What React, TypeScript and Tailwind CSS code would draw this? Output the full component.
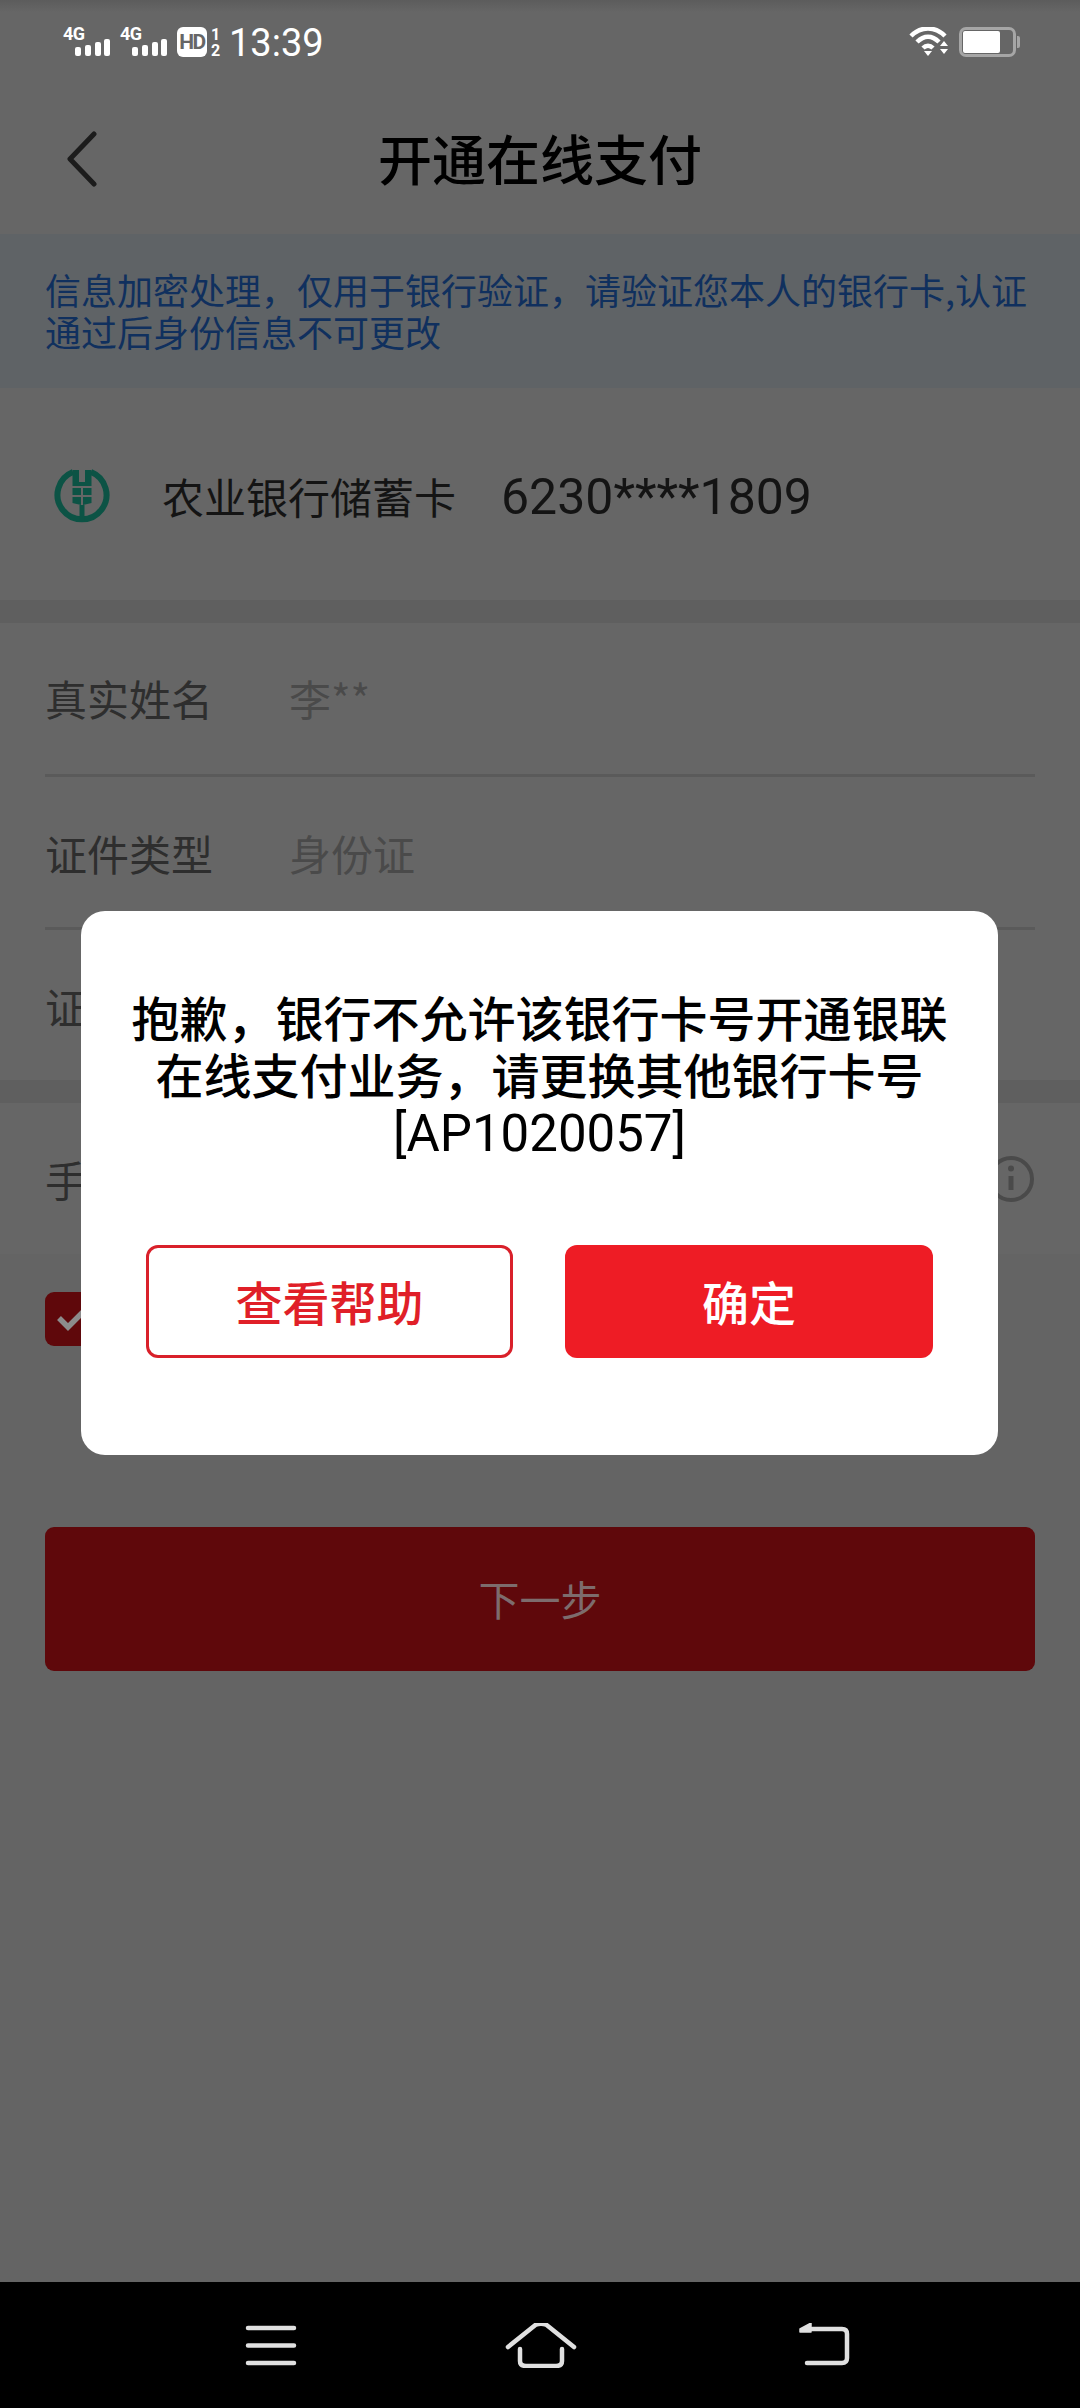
const cjk = "font-['Noto_Sans_CJK_SC','Roboto',sans-serif]";

function Signal() {
  return (
    <div className="relative w-[48px] h-[30px]">
      <span className="absolute left-0 top-[-2px] text-[18px] leading-[18px] font-bold tracking-[-0.5px] text-white font-['Roboto',sans-serif]">4G</span>
      <svg className="absolute left-[12px] top-[12px]" width="36" height="17" viewBox="0 0 36 17" fill="#fff">
        <rect x="0" y="8" width="6" height="9" rx="2" />
        <rect x="10" y="6" width="6" height="11" rx="2" />
        <rect x="20" y="3" width="6" height="14" rx="2" />
        <rect x="29" y="0" width="6" height="17" rx="2" />
      </svg>
    </div>
  );
}

function StatusBar() {
  return (
    <div className="h-[84px] flex items-start justify-between pt-[27px] pl-[63px] pr-[64px] bg-[linear-gradient(#5c5c5c_0px,#666_12px)]">
      <div className="flex items-start">
        <div className="flex gap-[9px]"><Signal /><Signal /></div>
        <div className="ml-[9px] w-[30px] h-[30px] bg-white rounded-[6px] flex items-center justify-center text-[21px] leading-none font-bold tracking-[-1.5px] text-[#666] font-['Roboto',sans-serif]">HD</div>
        <div className="ml-[4px] w-[10px] flex flex-col text-[16px] leading-[16px] font-bold text-white font-['Roboto',sans-serif]"><span>1</span><span>2</span></div>
        <span className="ml-[8px] mt-[1px] text-[38px] leading-[30px] text-white font-['Roboto',sans-serif]">13:39</span>
      </div>
      <div className="flex items-start">
        <svg width="40" height="30" viewBox="0 0 40 30" fill="none" stroke="#fff" strokeLinecap="butt">
          <path d="M2 9 C12 -1 26 -1 36 9" strokeWidth="4.5" />
          <path d="M8 15 C15 8 23 8 30 15" strokeWidth="4.5" />
          <path d="M14 21 C17 18 21 18 24 21" strokeWidth="4.5" />
          <path d="M15 24 H23 L19 29 Z" fill="#fff" stroke="none" />
          <path d="M31 19 L35 14 L39 19 Z M31 22 H39 L35 27 Z" fill="#fff" stroke="none" />
        </svg>
        <div className="ml-[10px] relative w-[57px] h-[30px] border-[3px] border-[#a6a6a6] rounded-[7px] p-[1px]">
          <div className="w-[37px] h-full bg-white rounded-[2px]" />
          <div className="absolute right-[-7px] top-[6px] w-[3px] h-[12px] bg-[#a6a6a6] rounded-r-[2px]" />
        </div>
      </div>
    </div>
  );
}

function Logo() {
  return (
    <svg width="56" height="56" viewBox="0 0 56 56" fill="none">
      <path d="M19 5 A24.5 24.5 0 1 0 37 5" stroke="#0c5345" strokeWidth="6" />
      <path d="M18.5 3 H25 V15 H31 V3 H37.5 V19 H18.5 Z" fill="#0c5345" />
      <path d="M18.5 21 H27 V28 H18.5 Z M29 21 H37.5 V28 H29 Z M18.5 30 H27 V38 L18.5 36 Z M29 30 H37.5 V36 L29 38 Z M25.5 38 H30.5 V54 H25.5 Z" fill="#0c5345" />
    </svg>
  );
}

function Row({ label, value, line = true, height = "h-[152px]" }: { label: string; value?: string; line?: boolean; height?: string }) {
  return (
    <div className={`${height} mx-[45px] flex items-center text-[42px] ${line ? "border-b-[3px] border-[#5a5a5a]" : ""}`}>
      <span className="w-[244px] text-[#2e2e2e]">{label}</span>
      {value && <span className="text-[#4a4a4a]">{value}</span>}
    </div>
  );
}

function NavBar() {
  return (
    <div className="h-[126px] bg-black relative z-30 flex items-start">
      <svg className="mt-[41px]" width="1080" height="45" viewBox="0 0 1080 45" fill="none" stroke="#e0e0e0" strokeWidth="4.5" strokeLinecap="round" strokeLinejoin="round">
        <path d="M248 5 H294 M248 22.5 H294 M248 40 H294" />
        <path d="M508 22 L536 -0.5 Q541 -2 546 -0.5 L574 22" transform="translate(0 2)" />
        <path d="M520 26 V38 Q520 43 526 43 H556 Q562 43 562 38 V26" />
        <path d="M812 6 H842 Q847 6 847 11 V35 Q847 40 842 40 H807" />
        <path d="M800 6 L811 0 V9 H800 Z" fill="#e0e0e0" stroke="#e0e0e0" strokeWidth="1.5" />
      </svg>
    </div>
  );
}

export default function App() {
  return (
    <div className={`relative w-[1080px] h-[2408px] overflow-hidden bg-[#666666] flex flex-col ${cjk}`}>
      <StatusBar />
      <header className="h-[150px] relative flex items-center justify-center pb-[3px]">
        <svg className="absolute left-[66px] top-[47px]" width="32" height="56" viewBox="0 0 32 56" fill="none" stroke="#1c1c1c" strokeWidth="5" strokeLinecap="round" strokeLinejoin="round">
          <path d="M28 3 L4 28 L28 53" />
        </svg>
        <h1 className="text-[54px] leading-none font-medium text-black">开通在线支付</h1>
      </header>
      <div className="h-[154px] bg-[#5f6366] px-[45px] pt-[34px] text-[36px] leading-[42px] text-[#10305e]">
        信息加密处理，仅用于银行验证，请验证您本人的银行卡,认证<br />通过后身份信息不可更改
      </div>
      <div className="h-[212px] pl-[54px] pt-[2px] flex items-center">
        <Logo />
        <span className="ml-[52px] text-[42px] text-[#141414]">农业银行储蓄卡</span>
        <span className="ml-[45px] mt-[4px] text-[50px] text-[#141414] font-['Roboto',sans-serif]">6230****1809</span>
      </div>
      <div className="h-[23px] bg-[#5f5f5f]" />
      <Row label="真实姓名" value="李**" height="h-[154px] pb-[2px]" />
      <Row label="证件类型" value="身份证" height="h-[153px]" />
      <Row label="证件号码" line={false} height="h-[150px]" />
      <div className="h-[23px] bg-[#5f5f5f]" />
      <div className="h-[151px] mx-[45px] flex items-center justify-between text-[42px] text-[#2e2e2e]">
        <span>手机号码</span>
        <svg width="48" height="48" viewBox="0 0 48 48" fill="none" stroke="#4a4a4a" strokeWidth="4">
          <circle cx="24" cy="24" r="21" />
          <path d="M24 21 V35" strokeWidth="5" />
          <circle cx="24" cy="13.5" r="3" fill="#4a4a4a" stroke="none" />
        </svg>
      </div>
      <div className="flex-1 bg-[#646464] px-[45px] pt-[38px] flex flex-col">
        <div className="w-[54px] h-[54px] rounded-[9px] bg-[#5f080b] flex items-center justify-center">
          <svg width="32" height="24" viewBox="0 0 32 24" fill="none" stroke="#8c8c8c" strokeWidth="5.5">
            <path d="M3 11 L12 20 L29 3" />
          </svg>
        </div>
        <button className="mt-[181px] w-[990px] h-[144px] rounded-[9px] bg-[#5f080b] text-[41px] text-[#7d6c6d]">下一步</button>
      </div>
      <NavBar />
      <div className="absolute left-0 right-0 top-0 bottom-[126px] z-20 pointer-events-none">
        <div className="absolute left-[81px] top-[911px] w-[917px] h-[544px] bg-white rounded-[24px] pt-[77px] px-[50px] flex flex-col items-center pointer-events-auto">
          <p className="text-center text-[48px] leading-[57px] font-medium text-black w-[830px]">
            抱歉，银行不允许该银行卡号开通银联<br />在线支付业务，请更换其他银行卡号<br /><span className="font-['Roboto',sans-serif] font-normal text-[51px]">[AP1020057]</span>
          </p>
          <div className="mt-[83px] flex gap-[52px]">
            <button className="w-[367px] h-[113px] rounded-[12px] border-[3px] border-[#d9202a] text-[47px] font-medium text-[#e01f28]">查看帮助</button>
            <button className="w-[368px] h-[113px] rounded-[12px] bg-[#ee1c25] text-[47px] font-medium text-white">确定</button>
          </div>
        </div>
      </div>
    </div>
  );
}
